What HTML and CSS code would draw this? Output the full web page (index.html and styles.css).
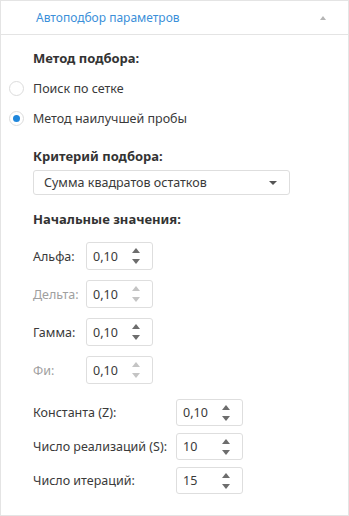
FILE: index.html
```html
<!DOCTYPE html>
<html>
<head>
  <title>Автоподбор параметров</title>
  <link rel="stylesheet" href="styles.css">
</head>
<body>
  <div class="panel">
    <div class="panel-header">
      <span class="panel-title">Автоподбор параметров</span>
      <span class="collapse-arrow"></span>
    </div>

    <div class="panel-body">
      <div class="section-title">Метод подбора:</div>
      <div class="radio-list">
        <label class="radio"><span class="radio-circle"></span>Поиск по сетке</label>
        <label class="radio checked"><span class="radio-circle"></span>Метод наилучшей пробы</label>
      </div>

      <div class="section-title criteria">Критерий подбора:</div>
      <div class="select">
        <span>Сумма квадратов остатков</span>
        <span class="select-arrow"></span>
      </div>

      <div class="section-title start">Начальные значения:</div>
      <div class="start-values">
        <div class="field">
          <span class="field-label">Альфа:</span>
          <div class="spinner"><span class="spinner-value">0,10</span><span class="spin-btns"><i class="up"></i><i class="down"></i></span></div>
        </div>
        <div class="field disabled">
          <span class="field-label">Дельта:</span>
          <div class="spinner"><span class="spinner-value">0,10</span><span class="spin-btns"><i class="up"></i><i class="down"></i></span></div>
        </div>
        <div class="field">
          <span class="field-label">Гамма:</span>
          <div class="spinner"><span class="spinner-value">0,10</span><span class="spin-btns"><i class="up"></i><i class="down"></i></span></div>
        </div>
        <div class="field disabled">
          <span class="field-label">Фи:</span>
          <div class="spinner"><span class="spinner-value">0,10</span><span class="spin-btns"><i class="up"></i><i class="down"></i></span></div>
        </div>
      </div>

      <div class="extra-values">
        <div class="field wide">
          <span class="field-label">Константа (Z):</span>
          <div class="spinner"><span class="spinner-value">0,10</span><span class="spin-btns"><i class="up"></i><i class="down"></i></span></div>
        </div>
        <div class="field wide">
          <span class="field-label">Число реализаций (S):</span>
          <div class="spinner"><span class="spinner-value">10</span><span class="spin-btns"><i class="up"></i><i class="down"></i></span></div>
        </div>
        <div class="field wide">
          <span class="field-label">Число итераций:</span>
          <div class="spinner"><span class="spinner-value">15</span><span class="spin-btns"><i class="up"></i><i class="down"></i></span></div>
        </div>
      </div>
    </div>
  </div>
</body>
</html>
```

FILE: styles.css
```css
body {
  margin: 0;
  font-family: "Noto Sans", "DejaVu Sans", sans-serif;
  font-size: 12.5px;
  color: #3a3a3a;
  background: #fff;
}

.panel {
  width: 349px;
  height: 516px;
  box-sizing: border-box;
  border: 1px solid #e4e4e4;
}

.panel-header {
  height: 33px;
  border-bottom: 1px solid #e4e4e4;
  display: flex;
  align-items: center;
  justify-content: space-between;
  padding: 0 22px 0 35px;
}

.panel-title {
  color: #3b8fd9;
  font-size: 12px;
}

.collapse-arrow {
  width: 0;
  height: 0;
  border-left: 3px solid transparent;
  border-right: 3px solid transparent;
  border-bottom: 4px solid #b5b5b5;
}

.panel-body {
  padding: 13px 0 0 32px;
}

.section-title {
  font-weight: bold;
  font-size: 13px;
  line-height: 20px;
  color: #333;
}

.radio-list {
  margin: 10px 0 0 -23px;
  display: flex;
  flex-direction: column;
  gap: 10px;
}

.radio {
  display: flex;
  align-items: center;
  gap: 10px;
  height: 20px;
}

.radio-circle {
  width: 15px;
  height: 15px;
  margin-left: -1px;
  margin-right: -1px;
  box-sizing: border-box;
  border-radius: 50%;
  border: 1px solid #dcdcdc;
  background: #fff;
  position: relative;
}

.radio.checked .radio-circle::after {
  content: "";
  position: absolute;
  left: 3px;
  top: 3px;
  width: 7px;
  height: 7px;
  border-radius: 50%;
  background: #1f87dc;
}

.section-title.criteria {
  margin-top: 18px;
}

.select {
  margin-top: 4px;
  width: 257px;
  height: 25px;
  box-sizing: border-box;
  border: 1px solid #dedede;
  border-radius: 3px;
  display: flex;
  align-items: center;
  justify-content: space-between;
  padding: 0 12px 0 10px;
}

.select-arrow {
  width: 0;
  height: 0;
  border-left: 4px solid transparent;
  border-right: 4px solid transparent;
  border-top: 4px solid #555;
}

.section-title.start {
  margin-top: 14px;
}

.start-values {
  margin-top: 13px;
  display: flex;
  flex-direction: column;
  gap: 10px;
}

.field {
  display: flex;
  align-items: center;
}

.field-label {
  width: 53px;
}

.field.wide .field-label {
  width: 143px;
}

.field.disabled .field-label {
  color: #a0a0a0;
}

.spinner {
  width: 67px;
  height: 28px;
  box-sizing: border-box;
  border: 1px solid #dedede;
  border-radius: 3px;
  display: flex;
  align-items: center;
  justify-content: space-between;
  padding: 0 12px 0 6px;
}

.spin-btns {
  display: flex;
  flex-direction: column;
  gap: 6px;
}

.spin-btns i {
  width: 0;
  height: 0;
  border-left: 4px solid transparent;
  border-right: 4px solid transparent;
}

.spin-btns .up {
  border-bottom: 5px solid #6d6d6d;
}

.spin-btns .down {
  border-top: 5px solid #6d6d6d;
}

.field.disabled .spin-btns .up {
  border-bottom-color: #c4c4c4;
}

.field.disabled .spin-btns .down {
  border-top-color: #c4c4c4;
}

.extra-values {
  margin-top: 15px;
  display: flex;
  flex-direction: column;
  gap: 7px;
}

.extra-values .spinner {
  height: 27px;
}
```
